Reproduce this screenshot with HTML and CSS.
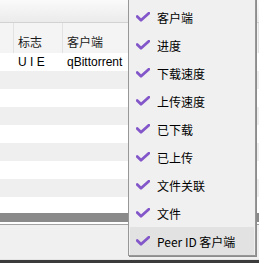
FILE: index.html
```html
<!DOCTYPE html>
<html>
<head>
  <title>Peers</title>
  <link rel="stylesheet" href="styles.css">
</head>
<body>
  <div class="window">
    <div class="toolbar"></div>
    <div class="table">
      <div class="head">
        <div class="cell c0"></div>
        <div class="cell c1">标志</div>
        <div class="cell c2">客户端</div>
      </div>
      <div class="rows">
        <div class="row">
          <div class="cell c0"></div>
          <div class="cell c1">U I E</div>
          <div class="cell c2">qBittorrent</div>
        </div>
        <div class="row"></div>
        <div class="row"></div>
        <div class="row"></div>
        <div class="row"></div>
        <div class="row"></div>
        <div class="row"></div>
        <div class="row"></div>
        <div class="row"></div>
      </div>
    </div>
    <div class="hscroll"></div>
    <div class="gap"></div>
    <div class="panel"></div>
    <div class="taskbar"></div>

    <ul class="menu">
      <li class="item"><span class="check"></span>客户端</li>
      <li class="item"><span class="check"></span>进度</li>
      <li class="item"><span class="check"></span>下载速度</li>
      <li class="item"><span class="check"></span>上传速度</li>
      <li class="item"><span class="check"></span>已下载</li>
      <li class="item"><span class="check"></span>已上传</li>
      <li class="item"><span class="check"></span>文件关联</li>
      <li class="item"><span class="check"></span>文件</li>
      <li class="item hover"><span class="check"></span>Peer ID 客户端</li>
    </ul>
  </div>

  <script>
    // the same checkmark goes in front of every menu entry
    var checkSvg = '<svg width="14" height="10" viewBox="0 0 14 10">' +
      '<path d="M1.2 4.6 L5 8.3 L12.8 1.2" fill="none" stroke="#8356c9" stroke-width="2.8" stroke-linecap="round" stroke-linejoin="round"/>' +
      '</svg>';
    var checks = document.querySelectorAll(".check");
    for (var i = 0; i < checks.length; i++) {
      checks[i].innerHTML = checkSvg;
    }
  </script>
</body>
</html>
```

FILE: styles.css
```css
body {
  margin: 0;
  font-family: "Liberation Sans", Arial, sans-serif;
  font-size: 12px;
  color: #000;
  background: #f0f0f0;
}

.window {
  position: relative;
  width: 259px;
  height: 263px;
  overflow: hidden;
}

.toolbar {
  height: 22px;
  background: linear-gradient(#fafafa, #ebebeb);
  border-bottom: 1px solid #d2d2d2;
}

.table {
  background: #fff;
}

.head {
  display: flex;
  height: 30px;
  background: #f4f4f4;
  font-family: "Noto Sans CJK SC", sans-serif;
  color: #1a1a1a;
}

.head .cell {
  padding-top: 10px;
  border-right: 1px solid #e2e2e2;
  box-sizing: border-box;
}

.cell {
  padding-left: 4px;
  box-sizing: border-box;
  white-space: nowrap;
}

.c0 {
  width: 14px;
  padding-left: 0;
}

.c1 {
  width: 49px;
}

.c2 {
  flex: 1;
}

.rows {
  height: 160px;
  overflow: hidden;
}

.row {
  display: flex;
  height: 18px;
  line-height: 18px;
  background: #fff;
}

.row:nth-child(even) {
  background: #efefef;
}

.hscroll {
  height: 9px;
  background: #8a8a8a;
}

.gap {
  height: 2px;
  background: #fff;
  border-bottom: 1px solid #a3a3a3;
}

.panel {
  height: 34px;
  background: #f0f0f0;
  border-bottom: 1px solid #e4e4e4;
}

.taskbar {
  height: 3px;
  background: #3b3b3b;
}

.menu {
  position: absolute;
  left: 128px;
  top: -1px;
  width: 128px;
  height: 257px;
  margin: 0;
  padding: 3px 1px 0 1px;
  box-sizing: border-box;
  list-style: none;
  background: #f0f0f0;
  border: 1px solid #979797;
  box-shadow: 1px 1px 0 #8c8c8c;
  font-family: "Noto Sans CJK SC", sans-serif;
}

.item {
  display: flex;
  align-items: center;
  height: 28px;
  padding-left: 6px;
}

.item.hover {
  background: #e2e2e2;
}

.check {
  display: flex;
  width: 14px;
  height: 10px;
  margin-right: 7px;
}
```
